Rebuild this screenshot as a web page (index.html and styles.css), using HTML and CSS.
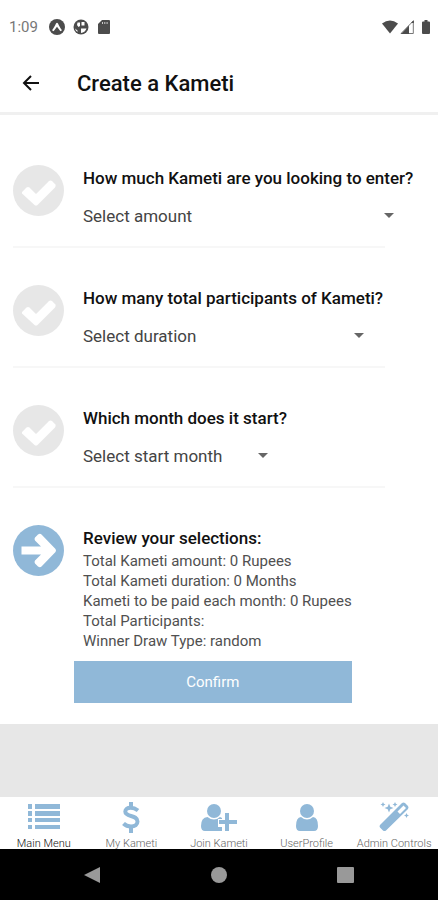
FILE: index.html
```html
<!DOCTYPE html>
<html lang="en">
<head>
<meta charset="utf-8">
<meta name="viewport" content="width=device-width, initial-scale=1">
<title>Create a Kameti</title>
<link rel="stylesheet" href="styles.css">
</head>
<body>
<div class="status">
  <span class="clock">1:09</span>
  <div class="status-icons notices">
    <svg width="16" height="16" viewBox="0 0 16 16"><circle cx="8" cy="8" r="8" fill="#4c4c4c"/><path d="M3 11.200C4.500 9.500 6 6.500 7 4.500Q8 3.200 9 4.500C10 6.500 11.500 9.500 13 11.200L11.400 12.200 8 7.800 4.600 12.200Z" fill="#fff"/></svg>
    <svg width="16" height="16" viewBox="0 0 16 16"><circle cx="8" cy="8" r="7.500" fill="#4c4c4c"/><path d="M4.500 3.500H7V7L5.500 8 4 6ZM8.500 3H11.500V6.500H8.500ZM8 9.500H13.500Q12 13.500 8 14ZM2 9.500 4.500 11.500V13Q2.500 11.500 2 9.500Z" fill="#fff"/></svg>
    <svg class="card" width="12" height="14" viewBox="0 0 12 14"><path d="M4 0H11Q12 0 12 1V13Q12 14 11 14H1Q0 14 0 13V4Z" fill="#4c4c4c"/><path d="M4.500 2V4M6.800 2V4M9.100 2V4" stroke="#ccc" stroke-width="1"/></svg>
  </div>
  <div class="status-icons system">
    <svg width="16" height="14" viewBox="0 0 16 14"><path d="M0 3.500Q8-2.500 16 3.500L8 13.500Z" fill="#4c4c4c"/></svg>
    <svg width="14" height="14" viewBox="0 0 14 14"><path d="M1 13.500 13.300 1V13.500Z" fill="#fff" stroke="#777"/><path d="M1 14 9 5.500V14Z" fill="#4c4c4c"/><path d="M11 3 13.800 0V3Z" fill="#4c4c4c"/></svg>
    <svg class="battery" width="8" height="14" viewBox="0 0 8 14"><path d="M2.500 0H5.500V1.500H7Q8 1.500 8 2.500V13Q8 14 7 14H1Q0 14 0 13V2.500Q0 1.500 1 1.500H2.500Z" fill="#4c4c4c"/></svg>
  </div>
</div>
<header class="header">
  <button class="back" type="button" aria-label="Back"><svg width="18" height="16" viewBox="0 0 18 16"><path d="M17 8H2M9 1 2 8 9 15" fill="none" stroke="#111" stroke-width="2"/></svg></button>
  <h1>Create a Kameti</h1>
</header>
<main class="main">
  <form class="steps">
    <section class="step">
      <svg class="mark" viewBox="0 0 51 51"><circle cx="25.500" cy="25.500" r="25.500" fill="#e7e7e7"/><path d="M9 27 13.500 22.500Q15 21.500 16.500 22.500L23 29 36 16Q37.500 15 39 16L42.500 19.500Q43 21 42 22.500L24.500 40Q23 41 21.500 40L9 28.500Z" fill="#fff"/></svg>
      <div class="field">
        <label for="amount">How much Kameti are you looking to enter?</label>
        <div class="picker"><select id="amount"><option>Select amount</option></select></div>
      </div>
    </section>
    <section class="step">
      <svg class="mark" viewBox="0 0 51 51"><circle cx="25.500" cy="25.500" r="25.500" fill="#e7e7e7"/><path d="M9 27 13.500 22.500Q15 21.500 16.500 22.500L23 29 36 16Q37.500 15 39 16L42.500 19.500Q43 21 42 22.500L24.500 40Q23 41 21.500 40L9 28.500Z" fill="#fff"/></svg>
      <div class="field">
        <label for="duration">How many total participants of Kameti?</label>
        <div class="picker"><select id="duration"><option>Select duration</option></select></div>
      </div>
    </section>
    <section class="step">
      <svg class="mark" viewBox="0 0 51 51"><circle cx="25.500" cy="25.500" r="25.500" fill="#e7e7e7"/><path d="M9 27 13.500 22.500Q15 21.500 16.500 22.500L23 29 36 16Q37.500 15 39 16L42.500 19.500Q43 21 42 22.500L24.500 40Q23 41 21.500 40L9 28.500Z" fill="#fff"/></svg>
      <div class="field">
        <label for="month">Which month does it start?</label>
        <div class="picker"><select id="month"><option>Select start month</option></select></div>
      </div>
    </section>
    <section class="step review">
      <svg class="mark" viewBox="0 0 51 51"><circle cx="25.500" cy="25.500" r="25.500" fill="#90b8d8"/><path d="M8.500 21.500H28L22 15.500Q21 14 22 12.500L25 9.500Q27 8 28.500 9.500L42.500 24Q43.500 25.500 42.500 27L28.500 41.500Q27 43 25 41.500L22 38.500Q21 37 22 35.500L28 29.500H8.500Z" fill="#fff"/></svg>
      <div class="field">
        <h2>Review your selections:</h2>
        <p>Total Kameti amount: 0 Rupees</p>
        <p>Total Kameti duration: 0 Months</p>
        <p>Kameti to be paid each month: 0 Rupees</p>
        <p>Total Participants:</p>
        <p>Winner Draw Type: random</p>
        <button class="confirm" type="button">Confirm</button>
      </div>
    </section>
  </form>
</main>
<nav class="tabs">
  <a class="active" href="#menu"><svg width="32" height="32" viewBox="0 0 32 32"><path d="M0 3H4V8H0ZM7 3H32V8H7ZM0 10H4V15H0ZM7 10H32V15H7ZM0 17H4V21H0ZM7 17H32V21H7ZM0 24H4V28H0ZM7 24H32V28H7Z"/></svg><span>Main Menu</span></a>
  <a href="#kameti"><svg width="32" height="32" viewBox="0 0 32 32"><path d="M23 9.500C20.500 7.500 18 6.700 15.500 6.700 12.300 6.700 10.300 8.300 10.300 10.600 10.300 16.500 22.500 13.500 22.500 20.500 22.500 23.500 20 25.500 16 25.500 13 25.500 10.500 24.500 8.500 22.500" fill="none" stroke="#90b8d8" stroke-width="4"/><path d="M14 1H18V7H14ZM14 25H18V32H14Z"/></svg><span>My Kameti</span></a>
  <a href="#join"><svg width="38" height="32" viewBox="0 0 38 32"><circle cx="14" cy="10" r="7"/><path d="M1 25Q1 16.500 7.500 16Q14 21 20 16L22 17V18H18V26H22V30H5Q1 30 1 25Z"/><path d="M25 12H29V19H37V23H29V30H25V23H19V19H25Z"/></svg><span>Join Kameti</span></a>
  <a href="#profile"><svg width="32" height="32" viewBox="0 0 32 32"><circle cx="16" cy="10" r="7"/><path d="M5 25Q5 16.500 10 16Q16 21 22 16Q27 16.500 27 25Q27 30 23 30H9Q5 30 5 25Z"/></svg><span>UserProfile</span></a>
  <a href="#admin"><svg width="32" height="32" viewBox="0 0 32 32"><path fill-rule="evenodd" d="M2 24 24 2Q25.500 1 27 2L30 5Q31 6.500 30 8L8 29.500Q6.500 30.500 5 29.500L2 26.500Q1 25 2 24ZM19.500 10.500 22 13 28 7 25.500 4.500Z"/><path d="M11 2.500 12.300 5.700 15.500 7 12.300 8.300 11 11.500 9.700 8.300 6.500 7 9.700 5.700ZM5 1 5.800 2.700 7.500 3.500 5.800 4.300 5 6 4.200 4.300 2.500 3.500 4.200 2.700ZM17 1 17.800 2.700 19.500 3.500 17.800 4.300 17 6 16.200 4.300 14.500 3.500 16.200 2.700ZM28.500 12 29.300 13.700 31 14.500 29.300 15.300 28.500 17 27.700 15.300 26 14.500 27.700 13.700Z"/></svg><span>Admin Controls</span></a>
</nav>
<div class="system-nav">
  <button type="button" aria-label="System back"><svg width="18" height="18" viewBox="0 0 18 18"><path d="M17 1V17L1 9Z" stroke-linejoin="round"/></svg></button>
  <button type="button" aria-label="Home"><svg width="18" height="18" viewBox="0 0 18 18"><circle cx="9" cy="9" r="8"/></svg></button>
  <button type="button" aria-label="Recent apps"><svg width="18" height="18" viewBox="0 0 18 18"><rect x="0" y="1" width="17" height="16" rx="1"/></svg></button>
</div>
</body>
</html>
```
FILE: styles.css
```css
* { box-sizing: border-box; }
body {
  margin: 0;
  min-height: 100vh;
  display: flex;
  flex-direction: column;
  background: #fff;
  color: #111;
  font-family: Roboto, sans-serif;
}
svg { display: block; flex: none; }
button { padding: 0; border: 0; background: none; font: inherit; }
.status {
  display: flex;
  align-items: center;
  height: 54px;
  padding: 0 8px 0 9px;
}
.clock { font-size: 15px; color: #777; }
.status-icons { display: flex; align-items: center; }
.notices { gap: 8px; margin-left: 11px; }
.card { margin-left: 1px; }
.system { gap: 2px; margin-left: auto; }
.battery { margin-left: 6px; }
.header {
  display: flex;
  align-items: center;
  gap: 37px;
  height: 61px;
  padding: 0 22px;
  border-bottom: 3px solid #f0f0f0;
}
h1 { margin: 0; font-size: 22px; font-weight: 500; }
.main { flex: 1; background: #e7e7e7; }
.steps { padding: 13px 53px 21px 13px; background: #fff; }
.step {
  display: flex;
  align-items: flex-start;
  gap: 19px;
  padding: 37px 0 17px;
  border-bottom: 2px solid #f7f7f7;
}
.mark { width: 51px; height: 51px; }
.field { flex: none; }
label, h2 {
  display: block;
  margin: 0;
  font-size: 17px;
  font-weight: 500;
  line-height: 26px;
  white-space: nowrap;
}
.picker { position: relative; margin-top: 12px; }
.picker::after {
  content: "";
  position: absolute;
  top: 10px;
  right: 19px;
  border: 5px solid transparent;
  border-top-color: #666;
  border-bottom: 0;
}
select {
  display: block;
  width: 100%;
  height: 26px;
  padding: 0;
  border: 0;
  appearance: none;
  background: transparent;
  color: #444;
  font: 400 17px/26px Roboto, sans-serif;
}
.review { padding-bottom: 0; border: 0; }
.review p {
  margin: 0;
  color: #505050;
  font-size: 15px;
  line-height: 20px;
}
.confirm {
  display: block;
  width: calc(100% + 9px);
  height: 42px;
  margin: 10px 0 0 -9px;
  background: #90b8d8;
  color: #fff;
  font-size: 15px;
}
.tabs {
  display: grid;
  grid-template-columns: repeat(5, 1fr);
  height: 52px;
  background: #fff;
}
.tabs a {
  display: flex;
  flex-direction: column;
  align-items: center;
  gap: 5px;
  padding-top: 4px;
  color: #666;
  fill: #90b8d8;
  font-size: 11px;
  font-weight: 300;
  line-height: 12px;
  text-decoration: none;
  white-space: nowrap;
}
.tabs .active { color: #111; }
.system-nav {
  display: grid;
  grid-template-columns: repeat(3, 1fr);
  place-items: center;
  height: 51px;
  padding: 0 29px;
  background: #000;
  fill: #999;
}
```
